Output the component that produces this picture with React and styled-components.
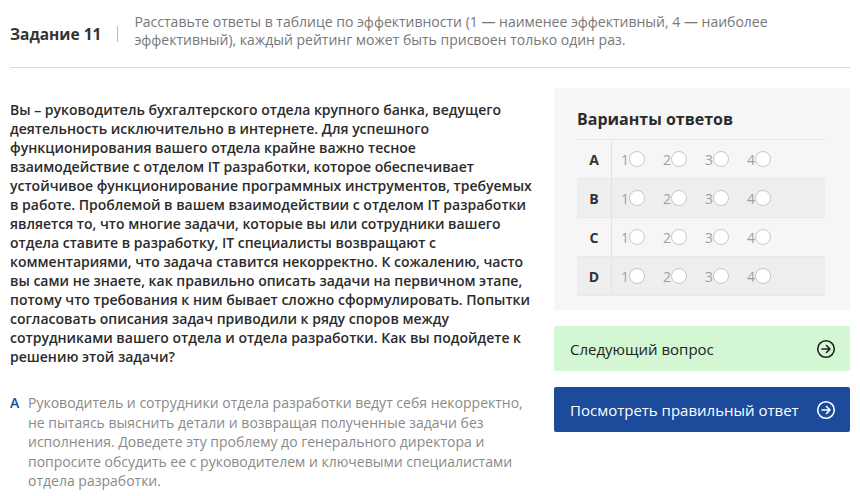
import React from 'react';
import styled, { createGlobalStyle } from 'styled-components';

const Global = createGlobalStyle`
  body {
    margin: 0;
    background: #fff;
    font-family: "Open Sans", "Liberation Sans", sans-serif;
  }
`;

const Page = styled.div`
  width: 840px;
  padding: 0 10px;
`;

const Header = styled.div`
  display: flex;
  align-items: center;
  height: 67px;
  border-bottom: 1px solid #d9d9d9;
`;

const TaskTitle = styled.div`
  font-size: 15.5px;
  font-weight: 700;
  color: #333;
  white-space: nowrap;
`;

const Divider = styled.span`
  width: 1px;
  height: 16px;
  background: #bbb;
  margin: 0 16px 0 16px;
`;

const TaskNote = styled.div`
  width: 640px;
  font-size: 14px;
  line-height: 18px;
  color: #777;
  margin-top: -6px;
`;

const Main = styled.div`
  display: flex;
  justify-content: space-between;
  padding-top: 20px;
`;

const Left = styled.div`
  width: 522px;
  padding-top: 12px;
`;

const Question = styled.p`
  margin: 0;
  font-size: 14px;
  line-height: 19px;
  font-weight: 600;
  color: #2b2b2b;
`;

const Answer = styled.div`
  display: flex;
  margin-top: 27px;
  font-size: 14px;
  line-height: 19.5px;
  color: #8a8a8a;
`;

const AnswerLetter = styled.span`
  color: #1e4b9b;
  font-weight: 600;
  width: 18px;
  flex-shrink: 0;
`;

const Right = styled.div`
  width: 296px;
  display: flex;
  flex-direction: column;
  gap: 16px;
`;

const Panel = styled.div`
  background: #f6f6f6;
  padding: 20px 25px 14px 23px;
`;

const PanelTitle = styled.div`
  font-size: 16px;
  font-weight: 700;
  color: #2b2b2b;
  margin-bottom: 9px;
`;

const Row = styled.div`
  display: flex;
  align-items: center;
  height: 38px;
  border-top: 1px solid #e8e8e8;
  background: ${p => (p.$shade ? '#eeeeee' : 'transparent')};
  &:last-child { border-bottom: 1px solid #e8e8e8; }
`;

const Letter = styled.div`
  width: 34px;
  height: 100%;
  display: flex;
  align-items: center;
  justify-content: center;
  border-right: 1px solid #e2e2e2;
  font-size: 14px;
  font-weight: 700;
  color: #333;
`;

const Options = styled.div`
  display: flex;
  gap: 12px;
  padding-left: 9px;
`;

const Option = styled.label`
  display: flex;
  align-items: center;
  width: 30px;
  font-size: 14px;
  color: #a0a0a0;
`;

const Radio = styled.span`
  width: 14px;
  height: 14px;
  border: 1px solid #c8c8c8;
  border-radius: 50%;
  background: #fff;
`;

const Button = styled.div`
  display: flex;
  align-items: center;
  justify-content: space-between;
  height: 45px;
  padding: 0 14px 0 16px;
  border-radius: 2px;
  font-size: 15px;
  background: ${p => (p.$primary ? '#1d4b9c' : '#d3f6d3')};
  color: ${p => (p.$primary ? '#fff' : '#222')};
`;

const ArrowIcon = ({ color }) => (
  <svg width="20" height="20" viewBox="0 0 20 20" fill="none" stroke={color} strokeWidth="1.6" strokeLinecap="round" strokeLinejoin="round">
    <circle cx="10" cy="10" r="8.3" />
    <path d="M6 10h8M10.5 6.5L14 10l-3.5 3.5" />
  </svg>
);

const rows = ['A', 'B', 'C', 'D'];

export default function App() {
  return (
    <Page>
      <Global />
      <Header>
        <TaskTitle>Задание 11</TaskTitle>
        <Divider />
        <TaskNote>
          Расставьте ответы в таблице по эффективности (1 — наименее эффективный, 4 — наиболее
          эффективный), каждый рейтинг может быть присвоен только один раз.
        </TaskNote>
      </Header>
      <Main>
        <Left>
          <Question>
            Вы – руководитель бухгалтерского отдела крупного банка, ведущего деятельность исключительно в интернете. Для успешного функционирования вашего отдела крайне важно тесное взаимодействие с отделом IT разработки, которое обеспечивает устойчивое функционирование программных инструментов, требуемых в работе. Проблемой в вашем взаимодействии с отделом IT разработки является то, что многие задачи, которые вы или сотрудники вашего отдела ставите в разработку, IT специалисты возвращают с комментариями, что задача ставится некорректно. К сожалению, часто вы сами не знаете, как правильно описать задачи на первичном этапе, потому что требования к ним бывает сложно сформулировать. Попытки согласовать описания задач приводили к ряду споров между сотрудниками вашего отдела и отдела разработки. Как вы подойдете к решению этой задачи?
          </Question>
          <Answer>
            <AnswerLetter>A</AnswerLetter>
            <span>
              Руководитель и сотрудники отдела разработки ведут себя некорректно, не пытаясь выяснить детали и возвращая полученные задачи без исполнения. Доведете эту проблему до генерального директора и попросите обсудить ее с руководителем и ключевыми специалистами отдела разработки.
            </span>
          </Answer>
        </Left>
        <Right>
          <Panel>
            <PanelTitle>Варианты ответов</PanelTitle>
            <div>
              {rows.map((r, i) => (
                <Row key={r} $shade={i % 2 === 1}>
                  <Letter>{r}</Letter>
                  <Options>
                    {[1, 2, 3, 4].map(n => (
                      <Option key={n}>
                        {n}
                        <Radio />
                      </Option>
                    ))}
                  </Options>
                </Row>
              ))}
            </div>
          </Panel>
          <Button>
            Следующий вопрос
            <ArrowIcon color="#222" />
          </Button>
          <Button $primary>
            Посмотреть правильный ответ
            <ArrowIcon color="#fff" />
          </Button>
        </Right>
      </Main>
    </Page>
  );
}
